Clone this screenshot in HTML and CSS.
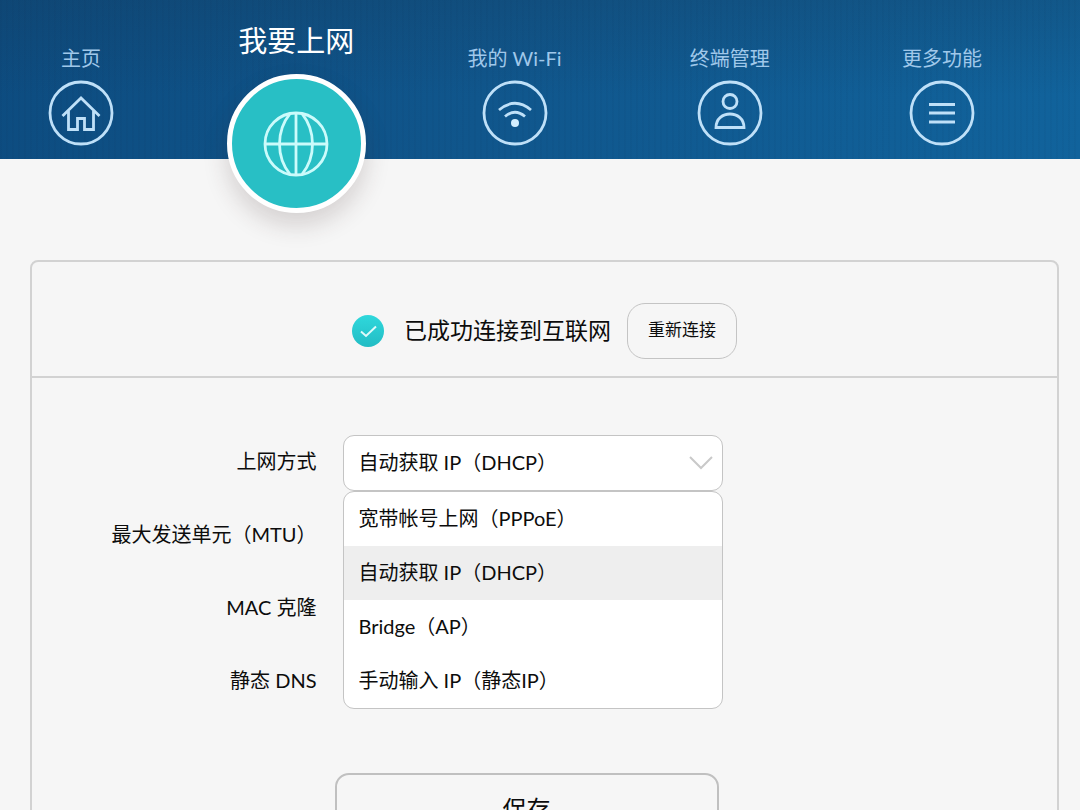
FILE: index.html
```html
<!DOCTYPE html>
<html lang="zh-CN">
<head>
<meta charset="utf-8">
<meta name="viewport" content="width=device-width, initial-scale=1">
<title>我要上网</title>
<link rel="stylesheet" href="styles.css">
</head>
<body>
<div class="page">
  <header class="topbar">
    <nav class="nav">
      <a class="nav-item" href="#home">
        <span class="nav-label">主页</span>
        <svg class="nav-icon" viewBox="0 0 66 66" aria-hidden="true">
          <circle cx="33" cy="33" r="31"/>
          <path d="M14.500 36 33 18 51.500 36M20.500 31V49.500H29.500V38.500H36.500V49.500H45.500V31"/>
        </svg>
      </a>
      <a class="nav-item nav-item-wide nav-item-active" href="#internet" aria-current="page">
        <span class="nav-label">我要上网</span>
        <span class="nav-badge">
          <svg class="globe" viewBox="0 0 66 66" aria-hidden="true">
            <circle cx="33" cy="33" r="31"/>
            <path d="M33 2V64M2 33H64M27 2.600C13 20 13 46 27 63.400M39 2.600C53 20 53 46 39 63.400"/>
          </svg>
        </span>
      </a>
      <a class="nav-item nav-item-wide" href="#wifi">
        <span class="nav-label">我的 Wi-Fi</span>
        <svg class="nav-icon" viewBox="0 0 66 66" aria-hidden="true">
          <circle cx="33" cy="33" r="31"/>
          <path d="M17 30Q33 16.500 49 30M23 36.500Q33 28 43 36.500"/>
          <circle class="dot" cx="33" cy="43" r="4"/>
        </svg>
      </a>
      <a class="nav-item" href="#devices">
        <span class="nav-label">终端管理</span>
        <svg class="nav-icon" viewBox="0 0 66 66" aria-hidden="true">
          <circle cx="33" cy="33" r="31"/>
          <circle cx="33" cy="21.500" r="7"/>
          <path d="M19 47.500C19 29.500 47 29.500 47 47.500Z"/>
        </svg>
      </a>
      <a class="nav-item" href="#more">
        <span class="nav-label">更多功能</span>
        <svg class="nav-icon" viewBox="0 0 66 66" aria-hidden="true">
          <circle cx="33" cy="33" r="31"/>
          <path d="M20 24.500H46M20 33H46M20 42H46"/>
        </svg>
      </a>
    </nav>
  </header>

  <main class="panel">
    <section class="status">
      <svg class="status-icon" viewBox="0 0 32 32" aria-hidden="true">
        <defs>
          <linearGradient id="ok" x1="0" y1="0" x2="0" y2="1">
            <stop offset="0" stop-color="#2fd8dc"/>
            <stop offset="1" stop-color="#22bcc4"/>
          </linearGradient>
        </defs>
        <circle cx="16" cy="16" r="16" fill="url(#ok)"/>
        <path d="M9 16.500 14 21 24 11.500" fill="none" stroke="#dffafa" stroke-width="2"/>
      </svg>
      <p class="status-text">已成功连接到互联网</p>
      <button class="reconnect" type="button">重新连接</button>
    </section>

    <form class="form">
      <div class="row">
        <label class="row-label" for="mode">上网方式</label>
        <div class="picker">
          <select class="picker-select" id="mode">
            <option>自动获取 IP（DHCP）</option>
          </select>
          <svg class="picker-arrow" viewBox="0 0 24 14" aria-hidden="true">
            <path d="M1 1 12 12 23 1"/>
          </svg>
          <ul class="menu" role="listbox" aria-label="上网方式">
            <li class="menu-item" role="option">宽带帐号上网（PPPoE）</li>
            <li class="menu-item menu-item-selected" role="option" aria-selected="true">自动获取 IP（DHCP）</li>
            <li class="menu-item" role="option">Bridge（AP）</li>
            <li class="menu-item" role="option">手动输入 IP（静态IP）</li>
          </ul>
        </div>
      </div>
      <div class="row">
        <label class="row-label" for="mtu">最大发送单元（MTU）</label>
        <input class="row-input" id="mtu" type="text">
      </div>
      <div class="row">
        <label class="row-label" for="mac">MAC 克隆</label>
        <input class="row-input" id="mac" type="text">
      </div>
      <div class="row">
        <label class="row-label" for="dns">静态 DNS</label>
        <input class="row-check" id="dns" type="checkbox">
      </div>
      <div class="actions">
        <button class="save" type="submit">保存</button>
      </div>
    </form>
  </main>
</div>
</body>
</html>
```

FILE: styles.css
```css
* {
  box-sizing: border-box;
}

body {
  margin: 0;
  background: #f6f6f6;
  color: #0c0c0c;
  font-family: Lato, "Noto Sans CJK SC", sans-serif;
  font-size: 20px;
  line-height: 28px;
}

button,
input,
select {
  font: inherit;
  color: inherit;
}

.page {
  height: 100vh;
  overflow-y: auto;
  scrollbar-width: none;
}

/* Top navigation */
.topbar {
  height: 159px;
  background:
    repeating-linear-gradient(90deg, rgba(0, 20, 50, 0.03) 0 2px, transparent 2px 6px),
    linear-gradient(180deg, rgba(20, 55, 85, 0.25), rgba(20, 55, 85, 0) 60%),
    linear-gradient(100deg, #0d4c80, #10568c 45%, #11639c);
}

.nav {
  display: flex;
  justify-content: space-between;
  padding: 0 58px 0 1px;
}

.nav-item {
  display: flex;
  flex-direction: column;
  align-items: center;
  gap: 8px;
  width: 160px;
  padding-top: 44px;
  color: #a0c8ea;
  text-decoration: none;
  white-space: nowrap;
}

.nav-item-wide {
  width: 166px;
}

.nav-icon,
.globe {
  width: 66px;
  height: 66px;
  fill: none;
  stroke: #bfe0f8;
  stroke-width: 2.8;
}

.nav-icon .dot {
  fill: #d3eefe;
  stroke: none;
}

.nav-item-active {
  gap: 13px;
  padding-top: 21px;
  color: #fff;
  font-size: 29px;
  line-height: 40px;
}

.nav-badge {
  display: flex;
  align-items: center;
  justify-content: center;
  width: 139px;
  height: 139px;
  border: 5px solid #fff;
  border-radius: 50%;
  background: #28bfc5;
  box-shadow: 0 12px 24px rgba(60, 40, 40, 0.18);
}

.globe {
  stroke: #cbfbfb;
}

/* Panel */
.panel {
  margin: 101px 21px 40px 30px;
  border: 2px solid #d2d2d2;
  border-radius: 8px;
}

.status {
  display: flex;
  align-items: center;
  justify-content: center;
  padding: 41px 0 17px;
  border-bottom: 2px solid #d2d2d2;
}

.status-icon {
  width: 32px;
  height: 32px;
  margin-right: 20px;
}

.status-text {
  margin: 0 16px 0 0;
  padding-bottom: 2px;
  font-size: 23px;
}

.reconnect {
  width: 110px;
  height: 56px;
  padding: 0 0 2px;
  border: 1px solid #c4c4c4;
  border-radius: 18px;
  background: transparent;
  font-size: 17px;
}

/* Form */
.form {
  padding: 48px 24px 40px 0;
}

.row {
  display: grid;
  grid-template-columns: minmax(0, 1fr) 380px minmax(0, 1fr);
  column-gap: 26px;
  align-items: center;
  height: 73px;
}

.row-label {
  padding-bottom: 4px;
  text-align: right;
  white-space: nowrap;
}

.row-input {
  width: 376px;
  height: 48px;
  border: 1px solid #c8c8c8;
  border-radius: 10px;
  background: #fff;
}

.row-check {
  width: 24px;
  height: 24px;
}

.picker {
  position: relative;
}

.picker-select {
  display: block;
  width: 100%;
  height: 56px;
  padding: 0 48px 2px 15px;
  appearance: none;
  border: 1px solid #c4c4c4;
  border-radius: 11px;
  background: #fff;
}

.picker-arrow {
  position: absolute;
  top: 21px;
  right: 10px;
  width: 24px;
  height: 14px;
  fill: none;
  stroke: #c9c9c9;
  stroke-width: 2;
  pointer-events: none;
}

.menu {
  position: absolute;
  z-index: 1;
  top: 100%;
  left: 0;
  width: 100%;
  margin: 0;
  padding: 0;
  overflow: hidden;
  border: 1px solid #c4c4c4;
  border-radius: 11px;
  background: #fff;
  list-style: none;
}

.menu-item {
  padding: 12px 15px 14px;
  line-height: 28px;
}

.menu-item-selected {
  background: #eee;
}

.actions {
  display: flex;
  justify-content: center;
  padding: 55px 12px 0 0;
}

.save {
  width: 384px;
  height: 72px;
  border: 2px solid #c0c0c0;
  border-radius: 14px;
  background: transparent;
  font-size: 24px;
}
```
